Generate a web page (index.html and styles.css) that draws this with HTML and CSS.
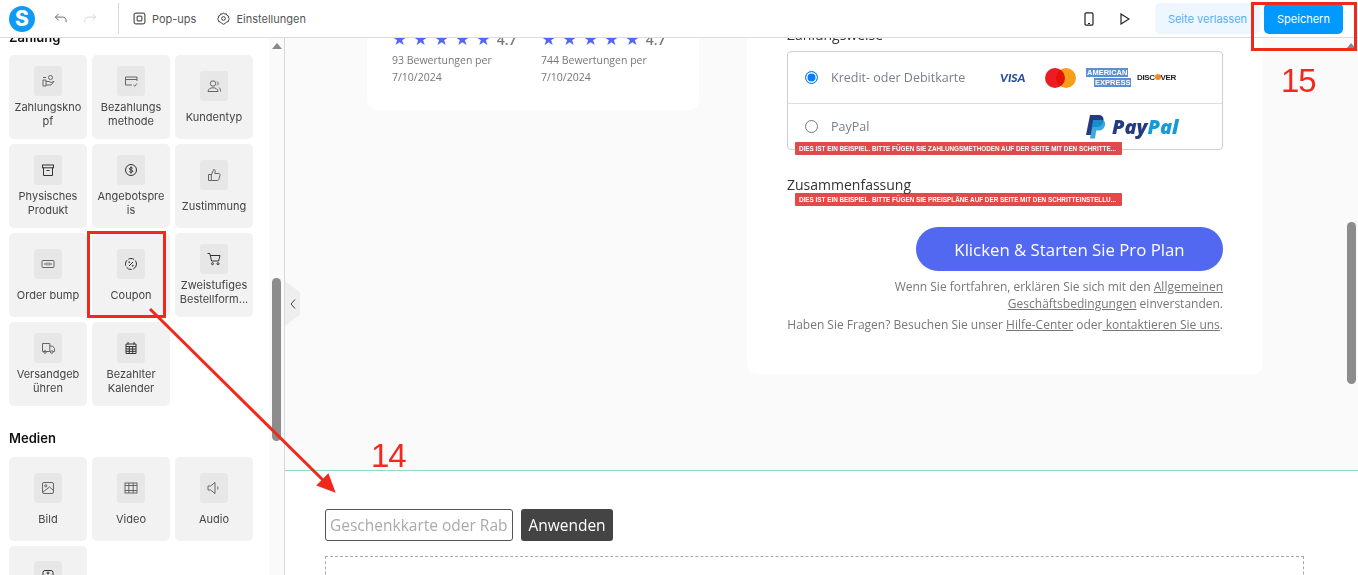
FILE: index.html
```html
<!DOCTYPE html>
<html lang="de">

<head>
    <meta charset="UTF-8">
    <meta name="viewport" content="width=device-width, initial-scale=1.0">
    <title>Seiteneditor</title>
    <link rel="stylesheet" href="styles.css">
</head>

<body>

    <!-- Obere Leiste -->
    <header class="topbar">
        <div class="logo">S</div>
        <div class="history">
            <svg class="ico" viewBox="0 0 16 16"><path d="M6 3 2.500 6.500 6 10M2.500 6.500H10c2.500 0 4 1.500 4 4v1.500"/></svg>
            <svg class="ico ico-off" viewBox="0 0 16 16"><path d="M10 3l3.500 3.500L10 10M13.500 6.500H6c-2.500 0-4 1.500-4 4v1.500"/></svg>
        </div>
        <div class="divider"></div>
        <a class="top-link">
            <svg class="ico-sm ico-pop" viewBox="0 0 14 14"><rect x="1.200" y="1.200" width="11.600" height="11.600" rx="2"/><rect x="4.500" y="4.500" width="5" height="5" rx="1"/></svg>
            Pop-ups
        </a>
        <a class="top-link">
            <svg class="ico-sm" viewBox="0 0 14 14"><path d="M7 .8l1.200 1.500 1.900-.3.700 1.800 1.800.7-.3 1.900L13.500 7.500l-1.200 1-.1 1.900-1.900.3L9 12.200l-2 1-2-1-1.300-1.500-1.900-.3-.1-1.900L.5 7.500l1.200-1.100-.3-1.900 1.800-.7.7-1.800 1.900.3z"/><circle cx="7" cy="7" r="2"/></svg>
            Einstellungen
        </a>
        <div class="top-right">
            <svg class="ico-device" viewBox="0 0 10 14"><rect x="1" y=".8" width="8" height="12.400" rx="1.300"/><path d="M4 11.500h2"/></svg>
            <svg class="ico-play" viewBox="0 0 10 12"><path d="M1 1v10l8-5z"/></svg>
            <button class="btn-leave">Seite verlassen</button>
            <button class="btn-save">Speichern</button>
        </div>
    </header>

    <div class="editor">
        <!-- Elementliste -->
        <aside class="sidebar">
            <div class="side-list">
                <h3 class="side-title side-title-first">Zahlung</h3>
                <div class="grid">
                    <div class="item">
                        <div class="tile"><svg viewBox="0 0 14 14"><circle cx="9.500" cy="3.500" r="2"/><path d="M2 6h3v6H2zM5 7.500h3l2 1 3-1-3 3.500H5"/><path d="M2 3.500h3"/></svg></div>
                        <span>Zahlungskno<br>pf</span>
                    </div>
                    <div class="item">
                        <div class="tile"><svg viewBox="0 0 14 14"><path d="M13 7V3H1.500v8H8M1.500 5.500H13M9.500 11l1.300 1.200 2.200-2.700"/></svg></div>
                        <span>Bezahlungs<br>methode</span>
                    </div>
                    <div class="item item-one">
                        <div class="tile"><svg viewBox="0 0 14 14"><circle cx="6" cy="4.500" r="2.700"/><path d="M1 12.500c0-5 10-5 10 0zM10 2.500c1.500 1 1.500 3 0 4M12 8.500c1 .8 1.500 2 1.500 4"/></svg></div>
                        <span>Kundentyp</span>
                    </div>
                    <div class="item">
                        <div class="tile"><svg class="dark" viewBox="0 0 14 14"><rect x="1.500" y="2" width="11" height="2.800"/><path d="M2.500 4.800V12.500h9V4.800M5.500 7.500h3"/></svg></div>
                        <span>Physisches<br>Produkt</span>
                    </div>
                    <div class="item">
                        <div class="tile"><svg class="dark" viewBox="0 0 14 14"><circle cx="7" cy="7" r="5.500"/><path d="M8.700 5.300C8 4.300 5.400 4.400 5.400 5.800c0 1.700 3.400.7 3.400 2.400 0 1.400-2.700 1.500-3.500.4M7 3.500v7"/></svg></div>
                        <span>Angebotspre<br>is</span>
                    </div>
                    <div class="item item-one">
                        <div class="tile"><svg viewBox="0 0 14 14"><path d="M1.500 6.500h2.800v6H1.500zM4.300 7l2.400-5.500c1.300 0 1.800 1 1.500 2.200L7.800 5.500h4c1 0 1.500.8 1.200 1.700l-1.200 4.300c-.2.700-.6 1-1.300 1H4.300"/></svg></div>
                        <span>Zustimmung</span>
                    </div>
                    <div class="item item-one">
                        <div class="tile"><svg viewBox="0 0 14 14"><rect x="1" y="3.500" width="12" height="7" rx="1"/><path d="M3 7h2.500M8.500 7H11M6 5.500v3M8 5.500v3"/></svg></div>
                        <span>Order bump</span>
                    </div>
                    <div class="item item-one">
                        <div class="tile"><svg class="dark" viewBox="0 0 14 14"><circle cx="7" cy="7" r="5.500" stroke-dasharray="6 1.500"/><path d="M5 9l4-4"/><circle cx="5.200" cy="5.200" r=".5"/><circle cx="8.800" cy="8.800" r=".5"/></svg></div>
                        <span>Coupon</span>
                    </div>
                    <div class="item">
                        <div class="tile"><svg class="dark" viewBox="0 0 14 14"><path d="M.5 1.500h2.300l1.800 7.500h7l1.400-5.500H3.300"/><circle cx="5.500" cy="11.700" r="1"/><circle cx="11" cy="11.700" r="1"/></svg></div>
                        <span>Zweistufiges<br>Bestellform...</span>
                    </div>
                    <div class="item">
                        <div class="tile"><svg viewBox="0 0 14 14"><path d="M8.800 10.500H1.500V2.500h7.300v8M8.800 5h2.700l2 2.500v3h-1.500"/><circle cx="4" cy="11" r="1.300"/><circle cx="10.800" cy="11" r="1.300"/></svg></div>
                        <span>Versandgeb<br>ühren</span>
                    </div>
                    <div class="item">
                        <div class="tile"><svg class="dark" viewBox="0 0 14 14"><path d="M2 3h10v9.500H2zM2 5.500h10M2 8h10M2 10.300h10M5.300 5.500v7M8.700 5.500v7M4 1v2.500M10 1v2.500"/></svg></div>
                        <span>Bezahlter<br>Kalender</span>
                    </div>
                </div>

                <h3 class="side-title">Medien</h3>
                <div class="grid">
                    <div class="item item-one">
                        <div class="tile"><svg viewBox="0 0 14 14"><rect x="1.500" y="1.500" width="11" height="11" rx="1.500"/><circle cx="4.800" cy="4.800" r="1.100"/><path d="M2 11l6.500-5 4 3.500"/></svg></div>
                        <span>Bild</span>
                    </div>
                    <div class="item item-one">
                        <div class="tile"><svg viewBox="0 0 14 14"><rect x="1" y="2" width="12" height="10"/><path d="M1 4.500h12M1 9.500h12M4.800 2v10M9.200 2v10"/></svg></div>
                        <span>Video</span>
                    </div>
                    <div class="item item-one">
                        <div class="tile"><svg viewBox="0 0 14 14"><path d="M1 5v4h2.500L8 12.500v-11L3.500 5zM10.500 5.500c.7 1 .7 2 0 3"/></svg></div>
                        <span>Audio</span>
                    </div>
                    <div class="item item-cut">
                        <div class="tile"><svg class="dark" viewBox="0 0 14 14"><rect x="2" y="1.500" width="10" height="11" rx="2"/><circle cx="7" cy="4" r="1"/></svg></div>
                    </div>
                </div>
            </div>
            <div class="side-track"><div class="side-arrow"></div><div class="side-thumb"></div></div>
        </aside>

        <!-- Seitenbereich -->
        <main class="canvas">
            <section class="page-top">
                <div class="card card-rating">
                    <div class="rating-col">
                        <div class="stars">★★★★★<b>4.7</b></div>
                        <p>93 Bewertungen per 7/10/2024</p>
                    </div>
                    <div class="rating-col">
                        <div class="stars">★★★★★<b>4.7</b></div>
                        <p>744 Bewertungen per 7/10/2024</p>
                    </div>
                </div>

                <div class="card card-pay">
                    <h4 class="pay-title">Zahlungsweise</h4>
                    <div class="methods">
                        <div class="method method-card">
                            <i class="radio radio-on"></i>
                            <span class="method-name">Kredit- oder Debitkarte</span>
                            <div class="brands">
                                <span class="visa">VISA</span>
                                <span class="mc"><i></i><i></i></span>
                                <span class="amex"><b>AMERICAN</b><b class="amex-two">EXPRESS</b></span>
                                <span class="discover">DISC<u></u>VER</span>
                            </div>
                        </div>
                        <div class="method method-paypal">
                            <i class="radio"></i>
                            <span class="method-name">PayPal</span>
                            <div class="paypal">
                                <svg viewBox="0 0 20 24"><path fill="#253b80" d="M5 0h8c4 0 6 2 5.500 5.500C18 10 15 12 11 12H7.500L6 20H1z"/><path fill="#179bd7" opacity=".85" d="M8 5h8c3.500 0 4.500 2 4 5-.6 3.500-3 5.500-6.500 5.500h-2.300L10 23.500H5z"/></svg>
                                <span class="pp-a">Pay</span><span class="pp-b">Pal</span>
                            </div>
                        </div>
                        <div class="notice notice-a">DIES IST EIN BEISPIEL. BITTE FÜGEN SIE ZAHLUNGSMETHODEN AUF DER SEITE MIT DEN SCHRITTE...</div>
                    </div>

                    <h4 class="summary">Zusammenfassung</h4>
                    <div class="notice">DIES IST EIN BEISPIEL. BITTE FÜGEN SIE PREISPLÄNE AUF DER SEITE MIT DEN SCHRITTEINSTELLU...</div>

                    <button class="btn-start">Klicken &amp; Starten Sie Pro Plan</button>
                    <p class="terms">Wenn Sie fortfahren, erklären Sie sich mit den <a>Allgemeinen Geschäftsbedingungen</a> einverstanden.</p>
                    <p class="terms terms-help">Haben Sie Fragen? Besuchen Sie unser <a>Hilfe-Center</a> oder<a> kontaktieren Sie uns</a>.</p>
                </div>
            </section>

            <section class="page-bottom">
                <div class="coupon">
                    <input class="coupon-input" type="text" placeholder="Geschenkkarte oder Rabattcode">
                    <button class="coupon-btn">Anwenden</button>
                </div>
                <div class="dropzone"></div>
            </section>

            <div class="collapse"><svg viewBox="0 0 8 12"><path d="M6 1.500 2 6l4 4.500"/></svg></div>
            <div class="page-thumb"></div>
        </main>
    </div>

    <!-- Anmerkungen im Screenshot -->
    <div class="mark mark-coupon"></div>
    <div class="mark mark-save"></div>
    <div class="mark-arrow-up"></div>
    <span class="step step-14">14</span>
    <span class="step step-15">15</span>
    <svg class="arrow" viewBox="0 0 1358 575"><path d="M150 309 326 483" fill="none" stroke="#f0291d" stroke-width="3"/><path d="M334 491 318 485 328 475z" fill="#f0291d" stroke="#f0291d" stroke-width="2"/></svg>

</body>

</html>
```

FILE: styles.css
```css
* {
    margin: 0;
    padding: 0;
    box-sizing: border-box;
}

body {
    width: 1358px;
    height: 575px;
    overflow: hidden;
    display: flex;
    flex-direction: column;
    position: relative;
    font-family: 'Inter', sans-serif;
    background: white;
    color: #333;
}

svg {
    fill: none;
    stroke: #555;
    stroke-width: 1;
}

/* Obere Leiste */
.topbar {
    height: 38px;
    flex: none;
    display: flex;
    align-items: center;
    padding-left: 9px;
    background: white;
    border-bottom: 1px solid #dcdcdc;
    position: relative;
    z-index: 3;
}

.logo {
    width: 26px;
    height: 26px;
    border-radius: 50%;
    background: #0d9bf5;
    color: white;
    font-weight: 800;
    font-size: 21px;
    line-height: 26px;
    text-align: center;
}

.history {
    display: flex;
    gap: 15px;
    margin-left: 18px;
}

.ico {
    width: 15px;
    height: 15px;
    stroke: #666;
}

.ico-off {
    stroke: #d5d5d5;
}

.divider {
    width: 1px;
    height: 31px;
    background: #d8d8d8;
    margin: 0 14px 0 20px;
}

.top-link {
    display: flex;
    align-items: center;
    gap: 6px;
    font-size: 11px;
    color: #555;
    margin-right: 21px;
}

.ico-sm {
    width: 13px;
    height: 13px;
    stroke: #333;
}

.ico-pop {
    stroke: #555;
    stroke-width: 1.300;
}

.top-right {
    margin-left: auto;
    display: flex;
    align-items: center;
    margin-right: 15px;
}

.ico-device {
    width: 10px;
    height: 14px;
    stroke: #222;
    stroke-width: 1.200;
    margin-right: 26px;
}

.ico-play {
    width: 10px;
    height: 12px;
    stroke: #222;
    stroke-width: 1.200;
    margin-right: 25px;
}

.btn-leave,
.btn-save {
    border: none;
    border-radius: 5px;
    font-family: 'Inter', sans-serif;
    font-size: 11px;
    height: 31px;
}

.btn-leave {
    width: 105px;
    background: #eef7ff;
    color: #58aef5;
}

.btn-save {
    width: 79px;
    margin-left: 4px;
    background: #0099ff;
    color: white;
}

.editor {
    flex: 1;
    display: flex;
    min-height: 0;
}

/* Elementliste */
.sidebar {
    width: 285px;
    flex: none;
    display: flex;
    overflow: hidden;
    border-right: 1px solid #d8d8d8;
}

.side-list {
    width: 269px;
    padding-left: 9px;
    margin-top: -9px;
}

.side-title {
    font-size: 13px;
    font-weight: 600;
    color: #111;
    line-height: 16px;
    margin: 24px 0 11px;
}

.side-title-first {
    margin: 0 0 10px;
}

.grid {
    display: grid;
    grid-template-columns: repeat(3, 78px);
    grid-auto-rows: 84px;
    gap: 5px;
}

.item {
    background: #f2f2f2;
    border-radius: 5px;
    display: flex;
    flex-direction: column;
    align-items: center;
    justify-content: center;
    gap: 4px;
    font-size: 11px;
    line-height: 14px;
    color: #444;
    text-align: center;
}

.item-one {
    gap: 9px;
}

.item-cut {
    justify-content: flex-start;
    padding-top: 15px;
}

.tile {
    width: 28px;
    height: 30px;
    background: #e7e7e7;
    border-radius: 3px;
    display: flex;
    align-items: center;
    justify-content: center;
}

.tile svg {
    width: 14px;
    height: 14px;
    stroke: #666;
}

.tile svg.dark {
    stroke: #333;
}

.side-track {
    width: 15px;
    background: #fafafa;
    position: relative;
}

.side-arrow {
    position: absolute;
    left: 3px;
    top: 5px;
    border: 5px solid transparent;
    border-top: none;
    border-bottom: 6px solid #888;
}

.side-thumb {
    position: absolute;
    left: 3px;
    top: 240px;
    width: 9px;
    height: 163px;
    border-radius: 5px;
    background: #8c8c8c;
}

/* Seitenbereich */
.canvas {
    flex: 1;
    display: flex;
    flex-direction: column;
    position: relative;
    overflow: hidden;
}

.page-top {
    height: 433px;
    flex: none;
    display: flex;
    align-items: flex-start;
    padding-left: 82px;
    gap: 48px;
    background: #fafafa;
    border-bottom: 1px solid #8fdcc0;
    overflow: hidden;
}

.card {
    background: white;
    border-radius: 10px;
}

.card-rating {
    width: 332px;
    height: 130px;
    margin-top: -58px;
    padding: 49px 25px 0;
    display: flex;
    gap: 29px;
    font-family: 'Open Sans', sans-serif;
}

.rating-col {
    width: 120px;
}

.stars {
    font-family: 'DejaVu Sans', sans-serif;
    font-size: 17px;
    line-height: 20px;
    letter-spacing: 5.700px;
    color: #5368f1;
    white-space: nowrap;
}

.stars b {
    font-family: 'Open Sans', sans-serif;
    font-weight: 600;
    font-size: 14px;
    letter-spacing: 0;
    color: #777;
}

.rating-col p {
    font-size: 10.500px;
    line-height: 17px;
    color: #777;
    margin-top: 2px;
}

.card-pay {
    width: 516px;
    height: 401px;
    margin-top: -65px;
    padding: 52px 40px 0;
    font-family: 'Open Sans', sans-serif;
    color: #555;
}

.pay-title {
    font-weight: 400;
    font-size: 14px;
    line-height: 20px;
    color: #333;
}

.methods {
    margin-top: 6px;
    height: 99px;
    border: 1px solid #ccd0d6;
    border-radius: 4px;
    position: relative;
}

.method {
    height: 52px;
    display: flex;
    align-items: center;
    padding-left: 17px;
    font-size: 12.500px;
    color: #7a7f88;
}

.method-card {
    border-bottom: 1px solid #dcdfe3;
}

.method-paypal {
    height: 45px;
}

.radio {
    width: 13px;
    height: 13px;
    border-radius: 50%;
    border: 1px solid #777;
    margin-right: 13px;
    flex: none;
    background: white;
}

.radio-on {
    border: 1.500px solid #0a7cff;
    box-shadow: inset 0 0 0 1.500px white;
    background: #0a7cff;
}

.method-name {
    width: 169px;
}

.brands {
    display: flex;
    align-items: center;
}

.visa {
    font: italic 900 12px 'Lato', sans-serif;
    color: #2a4f9c;
    width: 45px;
}

.mc {
    display: flex;
    width: 41px;
}

.mc i {
    width: 20px;
    height: 20px;
    border-radius: 50%;
    background: #eb1c22;
}

.mc i + i {
    background: #f79e1b;
    margin-left: -9px;
    mix-blend-mode: multiply;
}

.amex {
    width: 43px;
    margin-right: 8px;
    display: flex;
    flex-direction: column;
    gap: 1px;
    align-items: flex-start;
    white-space: nowrap;
}

.amex b {
    font: 700 7.500px/9px 'Liberation Sans', sans-serif;
    color: white;
    background: #5c8fd0;
    padding: 0 1px;
}

.amex-two {
    margin-left: 8px;
}

.discover {
    font: 700 8px 'Liberation Sans', sans-serif;
    letter-spacing: -.4px;
    color: #222;
}

.discover u {
    display: inline-block;
    width: 6px;
    height: 6px;
    border-radius: 50%;
    background: #f58a20;
}

.paypal {
    margin-left: 85px;
    display: flex;
    align-items: center;
    font: italic 800 20px 'Open Sans', sans-serif;
}

.paypal svg {
    width: 20px;
    height: 24px;
    margin-right: 7px;
    stroke: none;
}

.pp-a {
    color: #253b80;
}

.pp-b {
    color: #179bd7;
}

.notice {
    width: 327px;
    height: 13px;
    margin-left: 8px;
    background: #e24a4a;
    border-radius: 1px;
    color: white;
    font: 700 6.350px/13px 'Liberation Sans', sans-serif;
    padding-left: 4px;
    white-space: nowrap;
    overflow: hidden;
}

.notice-a {
    position: absolute;
    left: -1px;
    top: 90px;
}

.summary {
    font-weight: 400;
    font-size: 14px;
    line-height: 16px;
    color: #333;
    margin-top: 27px;
}

.btn-start {
    display: block;
    width: 307px;
    height: 44px;
    margin: 21px 0 7px auto;
    border: none;
    border-radius: 22px;
    background: #5368f1;
    color: white;
    font-family: 'Open Sans', sans-serif;
    font-weight: 500;
    font-size: 16.800px;
}

.terms {
    font-size: 12px;
    line-height: 17px;
    text-align: right;
    color: #777;
    margin-left: 100px;
}

.terms-help {
    margin: 4px 0 0;
}

.terms a {
    text-decoration: underline;
}

.page-bottom {
    flex: 1;
    background: white;
    padding: 38px 54px 0 40px;
}

.coupon {
    display: flex;
    gap: 8px;
}

.coupon-input {
    width: 188px;
    height: 32px;
    border: 1px solid #555;
    border-radius: 3px;
    padding: 0 4px;
    font-family: 'Open Sans', sans-serif;
    font-size: 15.500px;
    outline: none;
}

.coupon-input::placeholder {
    color: #aaa;
}

.coupon-btn {
    width: 92px;
    height: 32px;
    border: none;
    border-radius: 3px;
    background: #444;
    color: white;
    font-family: 'Open Sans', sans-serif;
    font-weight: 500;
    font-size: 15.500px;
}

.dropzone {
    margin-top: 15px;
    height: 60px;
    border: 1px dashed #aaa;
}

.collapse {
    position: absolute;
    left: 0;
    top: 243px;
    width: 15px;
    height: 45px;
    background: #eee;
    clip-path: polygon(0 0, 100% 25%, 100% 75%, 0 100%);
    display: flex;
    align-items: center;
    justify-content: center;
}

.collapse svg {
    width: 8px;
    height: 12px;
    stroke: #445;
}

.page-thumb {
    position: absolute;
    right: 2px;
    top: 184px;
    width: 9px;
    height: 162px;
    border-radius: 5px;
    background: #8c8c8c;
}

/* Anmerkungen */
.mark {
    position: absolute;
    border: 3px solid #f0291d;
    z-index: 5;
}

.mark-coupon {
    left: 87px;
    top: 231px;
    width: 79px;
    height: 87px;
}

.mark-save {
    left: 1251px;
    top: 2px;
    width: 106px;
    height: 49px;
}

.mark-arrow-up {
    position: absolute;
    left: 1346px;
    top: 43px;
    border: 5px solid transparent;
    border-top: none;
    border-bottom: 6px solid #888;
    z-index: 4;
}

.step {
    position: absolute;
    font-family: 'Liberation Sans', sans-serif;
    font-size: 33px;
    line-height: 34px;
    letter-spacing: -1px;
    color: #f0291d;
    z-index: 5;
}

.step-14 {
    left: 371px;
    top: 439px;
}

.step-15 {
    left: 1281px;
    top: 64px;
}

.arrow {
    position: absolute;
    left: 0;
    top: 0;
    width: 1358px;
    height: 575px;
    stroke: none;
    z-index: 5;
}
```
